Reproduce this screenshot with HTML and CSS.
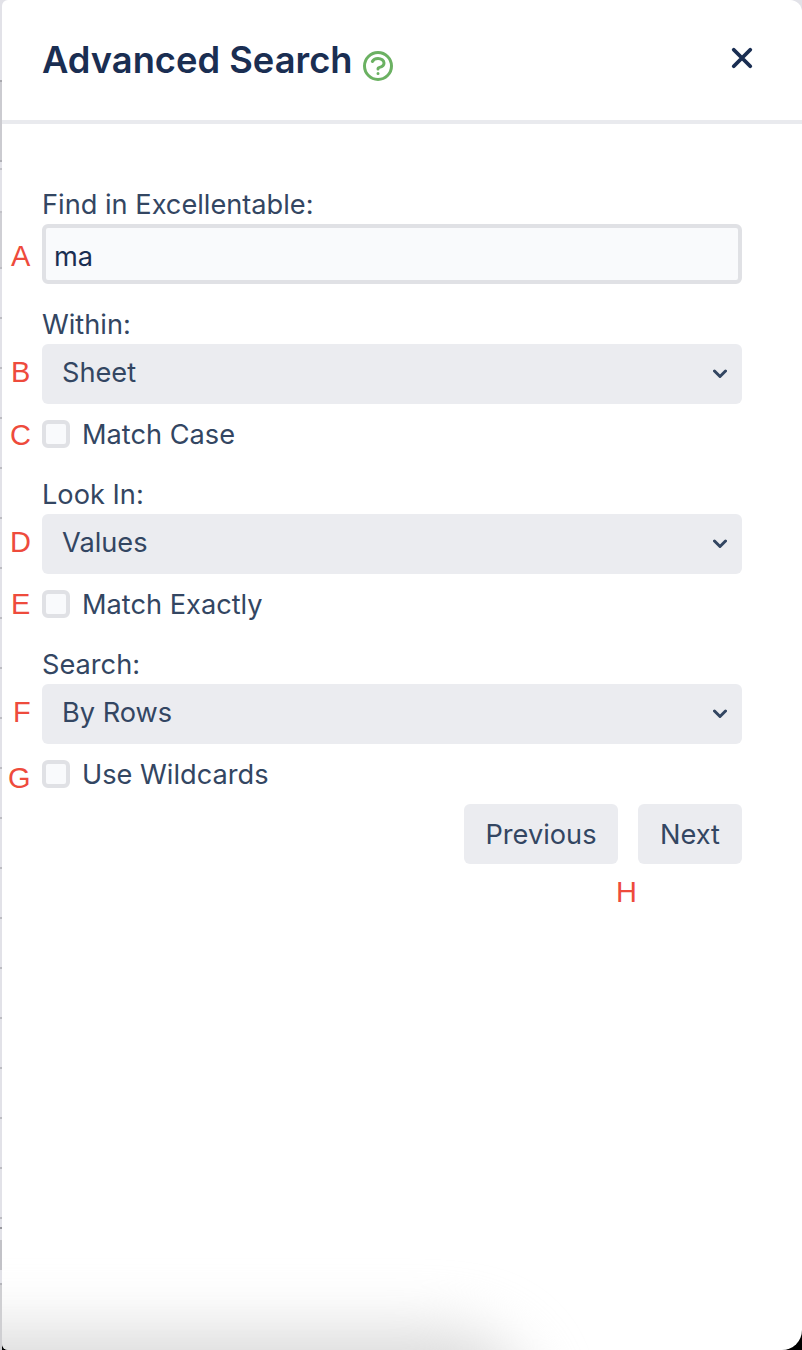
FILE: index.html
```html
<!DOCTYPE html>
<html lang="en">
<head>
<meta charset="utf-8">
<title>Advanced Search</title>
<link rel="stylesheet" href="styles.css">
</head>
<body>
<main class="panel">
  <header class="header">
    <h1 class="title">Advanced Search</h1>
    <svg class="help" viewBox="0 0 24 24" fill="none" stroke="currentColor" stroke-width="2" stroke-linecap="round" stroke-linejoin="round"><path d="M8.228 9c.549-1.165 2.03-2 3.772-2 2.21 0 4 1.343 4 3 0 1.4-1.278 2.575-3.006 2.907-.542.104-.994.54-.994 1.093m0 3h.01M21 12a9 9 0 11-18 0 9 9 0 0118 0z"/></svg>
    <svg class="close" viewBox="0 0 24 24" fill="none" stroke="currentColor" stroke-width="4.200" stroke-linecap="round"><path d="M3 3l18 18M21 3L3 21"/></svg>
  </header>
  <form class="form">
    <label class="label" for="find">Find in Excellentable:</label>
    <div class="annotated">
      <span class="mark mark-a">A</span>
      <input class="text-input" id="find" type="text" value="ma">
    </div>

    <label class="label label-gap" for="within">Within:</label>
    <div class="annotated select-wrap">
      <span class="mark mark-b">B</span>
      <select class="select" id="within"><option>Sheet</option></select>
      <svg class="chevron" viewBox="0 0 14 10" fill="none" stroke="currentColor" stroke-width="3" stroke-linecap="round" stroke-linejoin="round"><path d="M1.500 2l5.500 5.500 5.500-5.500"/></svg>
    </div>
    <label class="check annotated">
      <span class="mark mark-c">C</span>
      <input class="checkbox" type="checkbox">
      <span>Match Case</span>
    </label>

    <label class="label label-section" for="look">Look In:</label>
    <div class="annotated select-wrap">
      <span class="mark mark-d">D</span>
      <select class="select" id="look"><option>Values</option></select>
      <svg class="chevron" viewBox="0 0 14 10" fill="none" stroke="currentColor" stroke-width="3" stroke-linecap="round" stroke-linejoin="round"><path d="M1.500 2l5.500 5.500 5.500-5.500"/></svg>
    </div>
    <label class="check annotated">
      <span class="mark mark-e">E</span>
      <input class="checkbox" type="checkbox">
      <span>Match Exactly</span>
    </label>

    <label class="label label-section" for="search">Search:</label>
    <div class="annotated select-wrap">
      <span class="mark mark-f">F</span>
      <select class="select" id="search"><option>By Rows</option></select>
      <svg class="chevron" viewBox="0 0 14 10" fill="none" stroke="currentColor" stroke-width="3" stroke-linecap="round" stroke-linejoin="round"><path d="M1.500 2l5.500 5.500 5.500-5.500"/></svg>
    </div>
    <label class="check annotated">
      <span class="mark mark-g">G</span>
      <input class="checkbox" type="checkbox">
      <span>Use Wildcards</span>
    </label>

    <div class="actions">
      <button class="button button-prev" type="button">Previous</button>
      <button class="button button-next" type="button">Next</button>
      <span class="mark mark-h">H</span>
    </div>
  </form>
</main>
</body>
</html>
```
FILE: styles.css
```css
* { box-sizing: border-box; }

html, body { margin: 0; height: 100%; }

body {
  width: 802px;
  height: 1350px;
  overflow: hidden;
  padding-left: 2px;
  font-family: Inter, "Liberation Sans", sans-serif;
  background:
    linear-gradient(to right, transparent 2px, #000 2px) 0 100% / 100% 20px no-repeat,
    linear-gradient(to bottom,
      transparent 80px, #a9a9af 80px, #a9a9af 82px, #cbcbd0 82px,
      #cbcbd0 160px, #b0b0b6 160px, #b0b0b6 162px, #e2e2e8 162px,
      #e2e2e8 168px, #c2c2c8 168px, #c2c2c8 170px, #e2e2e8 170px,
      #e2e2e8 211px, #c2c2c8 211px, #c2c2c8 213px, #cfcfd4 213px,
      #cfcfd4 267px, transparent 267px,
      transparent 1227px, #98989e 1227px, #98989e 1229px, transparent 1229px,
      transparent 1240px, #c2c2c7 1240px, #c2c2c7 1270px, transparent 1270px,
      transparent 1283px, #b4b4ba 1283px, #b4b4ba 1285px, #cfcfd2 1285px
    ) 0 0 / 2px 100% no-repeat,
    repeating-linear-gradient(to bottom, #bcbcc2 0, #bcbcc2 2px, transparent 2px, transparent 50px) 0 267px / 2px 1000px no-repeat,
    #e2e2e8;
}

.panel {
  position: relative;
  width: 800px;
  height: 1350px;
  overflow: hidden;
  background: #fff;
  border-radius: 6px 12px 20px 6px;
}

.panel::after {
  content: "";
  position: absolute;
  left: -80px;
  bottom: -72px;
  width: 610px;
  height: 92px;
  border-radius: 0 90px 0 0;
  background: #dadada;
  filter: blur(30px);
  pointer-events: none;
}

.header {
  display: flex;
  align-items: center;
  height: 124px;
  padding: 0 49px 4px 40px;
  border-bottom: 4px solid #e9eaee;
}

.title {
  margin: 4px 0 0;
  font-size: 36.300px;
  font-weight: 600;
  line-height: 44px;
  color: #1a2e52;
}

.help {
  width: 36px;
  height: 36px;
  margin: 16px 0 0 7.500px;
  color: #6bb162;
}

.close {
  width: 22px;
  height: 22px;
  margin: 0 0 0 auto;
  color: #1a2e52;
}

.form {
  display: flex;
  flex-direction: column;
  width: 700px;
  margin-left: 40px;
  padding-top: 64px;
  font-size: 27.200px;
  color: #334662;
}

.label {
  display: block;
  height: 32px;
  margin-bottom: 4px;
  line-height: 34px;
}

.label-gap { margin-top: 24px; }
.label-section { margin-top: 30px; }

.annotated { position: relative; }

.mark {
  position: absolute;
  font-family: "Liberation Sans", sans-serif;
  font-size: 29px;
  line-height: 32px;
  color: #ee4b3c;
}

.mark-a { left: -31px; top: 16px; }
.mark-b { left: -31px; top: 12px; }
.mark-c { left: -32px; top: -1px; }
.mark-d { left: -32px; top: 12px; }
.mark-e { left: -31px; top: -2px; }
.mark-f { left: -29px; top: 12px; }
.mark-g { left: -34px; top: 2px; }
.mark-h { right: 105px; top: 72px; }

.text-input {
  display: block;
  width: 100%;
  height: 60px;
  padding: 4px 8px 0;
  border: 4px solid #e0e1e5;
  border-radius: 6px;
  outline: none;
  background: #f9fafc;
  font: inherit;
  color: #1a2e52;
}

.select-wrap { display: block; }

.select {
  display: block;
  width: 100%;
  height: 60px;
  padding: 0 20px 3px;
  border: 0;
  border-radius: 6px;
  appearance: none;
  background: #ebecf0;
  font: inherit;
  color: #334662;
}

.chevron {
  position: absolute;
  right: 15px;
  top: 25px;
  width: 14px;
  height: 10px;
  color: #334662;
  pointer-events: none;
}

.check {
  display: flex;
  align-items: center;
  gap: 12px;
  height: 28px;
  margin-top: 16px;
}

.checkbox {
  flex: none;
  width: 28px;
  height: 28px;
  margin: 0;
  border: 4px solid #e0e1e5;
  border-radius: 6px;
  appearance: none;
  background: #f9fafc;
}

.actions {
  position: relative;
  display: flex;
  justify-content: flex-end;
  gap: 20px;
  margin-top: 16px;
}

.button {
  height: 60px;
  padding: 0;
  border: 0;
  border-radius: 6px;
  background: #ebecf0;
  font: inherit;
  color: #334662;
}

.button-prev { width: 154px; }
.button-next { width: 104px; }
```
